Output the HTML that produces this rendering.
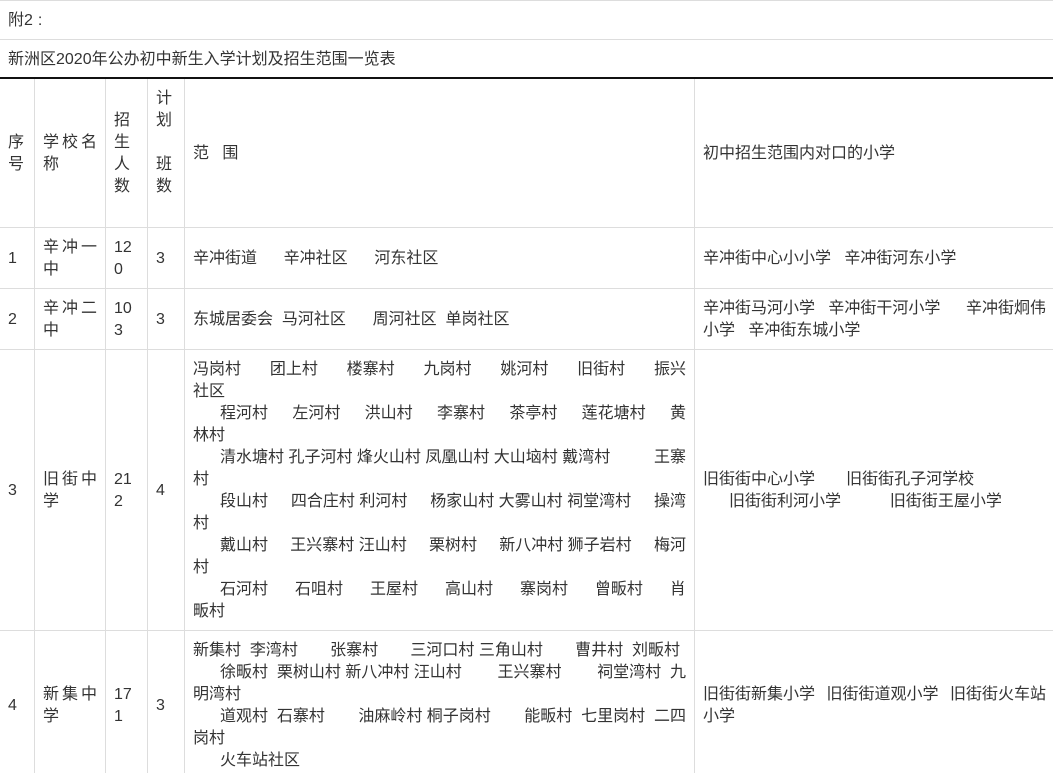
<!DOCTYPE html>
<html><head><meta charset="utf-8"><style>
html,body{margin:0;padding:0;background:#fff;}
body{width:1053px;height:773px;position:relative;overflow:hidden;font-family:"Liberation Sans","Noto Sans CJK SC",sans-serif;font-size:16px;color:#333;}
.h{position:absolute;left:0;width:1053px;height:1px;background:#ddd;}
.v{position:absolute;width:1px;background:#ddd;top:79px;height:694px;}
.t{position:absolute;line-height:22px;white-space:nowrap;margin-top:1px;}
.j{position:absolute;line-height:22px;display:flex;justify-content:space-between;white-space:nowrap;margin-top:1px;}
.s{letter-spacing:3px;}
</style></head><body>
<div class="h" style="top:0"></div>
<div class="h" style="top:39px"></div>
<div class="h" style="top:77px;height:2px;background:#111"></div>
<div class="h" style="top:227px"></div>
<div class="h" style="top:288px"></div>
<div class="h" style="top:349px"></div>
<div class="h" style="top:630px"></div>
<div class="v" style="left:34px"></div>
<div class="v" style="left:105px"></div>
<div class="v" style="left:147px"></div>
<div class="v" style="left:184px"></div>
<div class="v" style="left:694px"></div>

<div class="t" style="left:8px;top:9px">附2<span style="margin-left:5px">:</span></div>
<div class="t" style="left:8px;top:48px">新洲区2020年公办初中新生入学计划及招生范围一览表</div>

<div class="t" style="left:8px;top:131px">序<br>号</div>
<div class="t s" style="left:43px;top:131px">学校名<br>称</div>
<div class="t" style="left:114px;top:109px">招<br>生<br>人<br>数</div>
<div class="t" style="left:156px;top:87px">计<br>划<br><br>班<br>数</div>
<div class="t" style="left:193px;top:142px">范&nbsp;&nbsp;&nbsp;围</div>
<div class="t" style="left:703px;top:142px">初中招生范围内对口的小学</div>

<div class="t" style="left:8px;top:247px">1</div>
<div class="t s" style="left:43px;top:236px">辛冲一<br>中</div>
<div class="t" style="left:114px;top:236px">12<br>0</div>
<div class="t" style="left:156px;top:247px">3</div>
<div class="t" style="left:193px;top:247px">辛冲街道&nbsp;&nbsp;&nbsp;&nbsp;&nbsp;&nbsp;辛冲社区&nbsp;&nbsp;&nbsp;&nbsp;&nbsp;&nbsp;河东社区</div>
<div class="t" style="left:703px;top:247px">辛冲街中心小小学&nbsp;&nbsp;&nbsp;辛冲街河东小学</div>

<div class="t" style="left:8px;top:308px">2</div>
<div class="t s" style="left:43px;top:297px">辛冲二<br>中</div>
<div class="t" style="left:114px;top:297px">10<br>3</div>
<div class="t" style="left:156px;top:308px">3</div>
<div class="t" style="left:193px;top:308px">东城居委会&nbsp;&nbsp;马河社区&nbsp;&nbsp;&nbsp;&nbsp;&nbsp;&nbsp;周河社区&nbsp;&nbsp;单岗社区</div>
<div class="j" style="left:703px;width:343px;top:297px"><span>辛冲街马河小学&nbsp;&nbsp;&nbsp;辛冲街干河小学</span><span>辛冲街炯伟</span></div>
<div class="t" style="left:703px;top:319px">小学&nbsp;&nbsp;&nbsp;辛冲街东城小学</div>

<div class="t" style="left:8px;top:479px">3</div>
<div class="t s" style="left:43px;top:468px">旧街中<br>学</div>
<div class="t" style="left:114px;top:468px">21<br>2</div>
<div class="t" style="left:156px;top:479px">4</div>
<div class="j" style="left:193px;width:493px;top:358px"><span>冯岗村</span><span>团上村</span><span>楼寨村</span><span>九岗村</span><span>姚河村</span><span>旧街村</span><span>振兴</span></div>
<div class="t" style="left:193px;top:380px">社区</div>
<div class="j" style="left:220px;width:466px;top:402px"><span>程河村</span><span>左河村</span><span>洪山村</span><span>李寨村</span><span>茶亭村</span><span>莲花塘村</span><span>黄</span></div>
<div class="t" style="left:193px;top:424px">林村</div>
<div class="j" style="left:220px;width:466px;top:446px"><span>清水塘村 孔子河村 烽火山村 凤凰山村 大山垴村 戴湾村</span><span>王寨</span></div>
<div class="t" style="left:193px;top:468px">村</div>
<div class="j" style="left:220px;width:466px;top:490px"><span>段山村</span><span>四合庄村 利河村</span><span>杨家山村 大雾山村 祠堂湾村</span><span>操湾</span></div>
<div class="t" style="left:193px;top:512px">村</div>
<div class="j" style="left:220px;width:466px;top:534px"><span>戴山村</span><span>王兴寨村 汪山村</span><span>栗树村</span><span>新八冲村 狮子岩村</span><span>梅河</span></div>
<div class="t" style="left:193px;top:556px">村</div>
<div class="j" style="left:220px;width:466px;top:578px"><span>石河村</span><span>石咀村</span><span>王屋村</span><span>高山村</span><span>寨岗村</span><span>曾畈村</span><span>肖</span></div>
<div class="t" style="left:193px;top:600px">畈村</div>
<div class="t" style="left:703px;top:468px">旧街街中心小学&nbsp;&nbsp;&nbsp;&nbsp;&nbsp;&nbsp;&nbsp;旧街街孔子河学校</div>
<div class="t" style="left:729px;top:490px">旧街街利河小学&nbsp;&nbsp;&nbsp;&nbsp;&nbsp;&nbsp;&nbsp;&nbsp;&nbsp;&nbsp;&nbsp;旧街街王屋小学</div>

<div class="t" style="left:8px;top:694px">4</div>
<div class="t s" style="left:43px;top:683px">新集中<br>学</div>
<div class="t" style="left:114px;top:683px">17<br>1</div>
<div class="t" style="left:156px;top:694px">3</div>
<div class="j" style="left:193px;width:487px;top:639px"><span>新集村&nbsp;&nbsp;李湾村</span><span>张寨村</span><span>三河口村&nbsp;三角山村</span><span>曹井村&nbsp;&nbsp;刘畈村</span></div>
<div class="j" style="left:220px;width:466px;top:661px"><span>徐畈村&nbsp;&nbsp;栗树山村 新八冲村 汪山村</span><span>王兴寨村</span><span>祠堂湾村&nbsp;&nbsp;九</span></div>
<div class="t" style="left:193px;top:683px">明湾村</div>
<div class="j" style="left:220px;width:466px;top:705px"><span>道观村&nbsp;&nbsp;石寨村</span><span>油麻岭村 桐子岗村</span><span>能畈村&nbsp;&nbsp;七里岗村&nbsp;&nbsp;二四</span></div>
<div class="t" style="left:193px;top:727px">岗村</div>
<div class="t" style="left:220px;top:749px">火车站社区</div>
<div class="j" style="left:703px;width:343px;top:683px"><span>旧街街新集小学</span><span>旧街街道观小学</span><span>旧街街火车站</span></div>
<div class="t" style="left:703px;top:705px">小学</div>
</body></html>
